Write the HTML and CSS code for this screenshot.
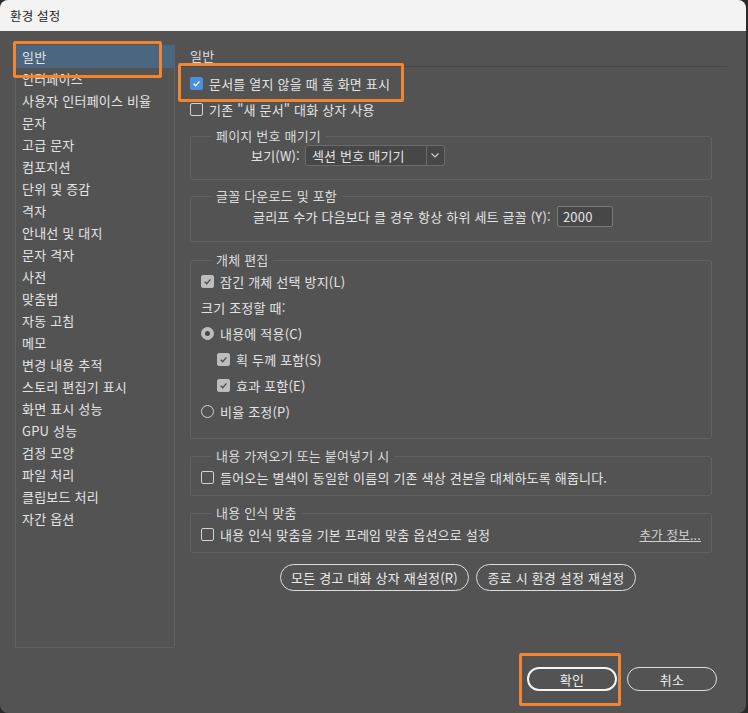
FILE: index.html
```html
<!DOCTYPE html>
<html lang="ko">
<head>
  <meta charset="UTF-8" />
  <meta name="viewport" content="width=device-width, initial-scale=1.0"/>
  <title>환경 설정</title>
  <link rel="stylesheet" href="styles.css">
</head>
<body>

  <div class="window">
    <div class="titlebar">환경 설정</div>

    <div class="content">
      <ul class="sidebar">
        <li class="active">일반</li>
        <li>인터페이스</li>
        <li>사용자 인터페이스 비율</li>
        <li>문자</li>
        <li>고급 문자</li>
        <li>컴포지션</li>
        <li>단위 및 증감</li>
        <li>격자</li>
        <li>안내선 및 대지</li>
        <li>문자 격자</li>
        <li>사전</li>
        <li>맞춤법</li>
        <li>자동 고침</li>
        <li>메모</li>
        <li>변경 내용 추적</li>
        <li>스토리 편집기 표시</li>
        <li>화면 표시 성능</li>
        <li>GPU 성능</li>
        <li>검정 모양</li>
        <li>파일 처리</li>
        <li>클립보드 처리</li>
        <li>자간 옵션</li>
      </ul>

      <div class="main">
        <div class="main-head">일반</div>

        <div class="options">
          <div class="row">
            <span class="box blue"><svg viewBox="0 0 13 13"><polyline points="3.2,6.8 5.6,9.2 10,4"/></svg></span>
            문서를 열지 않을 때 홈 화면 표시
          </div>
          <div class="row">
            <span class="box"></span>
            기존 "새 문서" 대화 상자 사용
          </div>

          <fieldset class="group g-page">
            <legend>페이지 번호 매기기</legend>
            <div class="field">
              <span>보기(W):</span>
              <div class="select">
                <span class="select-text">섹션 번호 매기기</span>
                <span class="select-arrow"><svg viewBox="0 0 8 5"><polyline points="0.5,0.5 4,4 7.5,0.5"/></svg></span>
              </div>
            </div>
          </fieldset>

          <fieldset class="group g-font">
            <legend>글꼴 다운로드 및 포함</legend>
            <div class="field">
              <span>글리프 수가 다음보다 클 경우 항상 하위 세트 글꼴 (Y):</span>
              <div class="num">2000</div>
            </div>
          </fieldset>

          <fieldset class="group g-object">
            <legend>개체 편집</legend>
            <div class="row">
              <span class="box grey"><svg viewBox="0 0 13 13"><polyline points="3.2,6.8 5.6,9.2 10,4"/></svg></span>
              잠긴 개체 선택 방지(L)
            </div>
            <div class="row">크기 조정할 때:</div>
            <div class="row">
              <span class="radio on"></span>
              내용에 적용(C)
            </div>
            <div class="row indent">
              <span class="box grey"><svg viewBox="0 0 13 13"><polyline points="3.2,6.8 5.6,9.2 10,4"/></svg></span>
              획 두께 포함(S)
            </div>
            <div class="row indent">
              <span class="box grey"><svg viewBox="0 0 13 13"><polyline points="3.2,6.8 5.6,9.2 10,4"/></svg></span>
              효과 포함(E)
            </div>
            <div class="row">
              <span class="radio"></span>
              비율 조정(P)
            </div>
          </fieldset>

          <fieldset class="group g-small">
            <legend>내용 가져오기 또는 붙여넣기 시</legend>
            <div class="row">
              <span class="box"></span>
              들어오는 별색이 동일한 이름의 기존 색상 견본을 대체하도록 해줍니다.
            </div>
          </fieldset>

          <fieldset class="group g-small">
            <legend>내용 인식 맞춤</legend>
            <div class="row">
              <span class="box"></span>
              내용 인식 맞춤을 기본 프레임 맞춤 옵션으로 설정
              <a class="more">추가 정보...</a>
            </div>
          </fieldset>
        </div>

        <div class="resets">
          <button class="pill reset-all">모든 경고 대화 상자 재설정(R)</button>
          <button class="pill reset-quit">종료 시 환경 설정 재설정</button>
        </div>
      </div>
    </div>

    <div class="footer">
      <button class="pill ok">확인</button>
      <button class="pill">취소</button>
    </div>

    <!-- 강조 표시 -->
    <div class="mark mark-nav"></div>
    <div class="mark mark-home"></div>
    <div class="mark mark-ok"></div>
  </div>

</body>
</html>
```

FILE: styles.css
```css
* {
  box-sizing: border-box;
}

html, body {
  margin: 0;
  background: #2a2a2a;
}

body {
  font-family: "Noto Sans CJK KR", "Noto Sans", sans-serif;
  font-size: 13px;
  letter-spacing: 0.2px;
  color: #e4e4e4;
}

.window {
  position: relative;
  width: 746px;
  height: 713px;
  background: #535353;
  border-radius: 8px;
  overflow: hidden;
  display: flex;
  flex-direction: column;
}

.titlebar {
  height: 31px;
  flex-shrink: 0;
  background: #f3f3f3;
  color: #1b1b1b;
  font-size: 12.5px;
  line-height: 31px;
  padding-left: 10px;
}

.content {
  display: flex;
  padding: 14px 0 0 15px;
}

/* 왼쪽 목록 */
.sidebar {
  list-style: none;
  margin: 0;
  padding: 0;
  width: 160px;
  height: 603px;
  border: 1px solid #616161;
  border-top: none;
}

.sidebar li {
  height: 22px;
  line-height: 22px;
  padding-left: 6px;
  white-space: nowrap;
}

.sidebar li.active {
  background: #4a6681;
  height: 23px;
  line-height: 23px;
}

/* 오른쪽 설정 영역 */
.main {
  margin-left: 3px;
  width: 549px;
}

.main-head {
  height: 22px;
  line-height: 22px;
  padding-left: 12px;
  border-bottom: 1px solid #474747;
  color: #dcdcdc;
}

.options {
  padding: 3px 0 0 12px;
}

.row {
  display: flex;
  align-items: center;
  height: 26px;
  white-space: nowrap;
}

.row.indent {
  padding-left: 16px;
}

.box {
  width: 13px;
  height: 13px;
  border: 1px solid #d2d2d2;
  border-radius: 2px;
  margin-right: 6px;
  flex-shrink: 0;
}

.box svg {
  display: block;
  width: 11px;
  height: 11px;
  fill: none;
  stroke-width: 1.6;
}

.box.blue {
  background: #4b8fe2;
  border-color: #4b8fe2;
}

.box.blue svg {
  stroke: #fff;
}

.box.grey {
  background: #bdbdbd;
  border-color: #bdbdbd;
}

.box.grey svg {
  stroke: #4c4c4c;
}

.radio {
  width: 13px;
  height: 13px;
  border: 1px solid #d2d2d2;
  border-radius: 50%;
  margin-right: 6px;
  flex-shrink: 0;
  display: flex;
  align-items: center;
  justify-content: center;
}

.radio.on {
  background: #bdbdbd;
  border-color: #bdbdbd;
}

.radio.on::after {
  content: "";
  width: 5px;
  height: 5px;
  border-radius: 50%;
  background: #474747;
}

/* 그룹 상자 */
.group {
  width: 522px;
  margin: 9px 0 0;
  padding: 0 10px 5px;
  border: 1px solid #616161;
  border-radius: 2px;
  min-width: 0;
}

.group legend {
  margin-left: 10px;
  padding: 0 5px;
  height: 16px;
  line-height: 16px;
  color: #dcdcdc;
}

.g-page {
  margin-top: 6px;
  padding-bottom: 13px;
}

.g-font {
  margin-top: 8px;
  padding-bottom: 14px;
}

.g-object {
  margin-top: 10px;
  padding-bottom: 14px;
}

.field {
  display: flex;
  align-items: center;
  gap: 5px;
  height: 21px;
  margin-top: 1px;
  padding-left: 50px;
  white-space: nowrap;
}

.g-font .field {
  margin-top: 2px;
  padding-left: 52px;
  gap: 6px;
}

.select {
  display: flex;
  width: 140px;
  height: 21px;
  background: #474747;
  border: 1px solid #6b6b6b;
  border-radius: 3px;
}

.select-text {
  flex: 1;
  padding-left: 6px;
  line-height: 19px;
}

.select-arrow {
  width: 18px;
  border-left: 1px solid #6b6b6b;
  display: flex;
  align-items: center;
  justify-content: center;
}

.select-arrow svg {
  width: 8px;
  height: 5px;
  fill: none;
  stroke: #d0d0d0;
  stroke-width: 1.1;
}

.num {
  width: 56px;
  height: 21px;
  background: #474747;
  border: 1px solid #7a7a7a;
  border-radius: 2px;
  padding-left: 5px;
  line-height: 19px;
}

.more {
  margin-left: auto;
  color: #d0d0d0;
  text-decoration: underline;
  font-size: 12.5px;
}

/* 버튼 */
.pill {
  font-family: inherit;
  font-size: 13px;
  letter-spacing: 0.2px;
  color: #ececec;
  background: transparent;
  border: 1px solid #dedede;
  border-radius: 14px;
  padding: 0;
  cursor: pointer;
}

.resets {
  display: flex;
  gap: 7px;
  margin: 11px 0 0 102px;
}

.resets .pill {
  height: 27px;
}

.reset-all {
  width: 189px;
}

.reset-quit {
  width: 160px;
}

.footer {
  display: flex;
  justify-content: flex-end;
  gap: 10px;
  margin-top: 19px;
  padding-right: 29px;
}

.footer .pill {
  width: 90px;
  height: 24px;
  border-radius: 12px;
}

.footer .pill.ok {
  border: 2px solid #f4f4f4;
}

/* 주황색 표시 상자 */
.mark {
  position: absolute;
  border: 3px solid #f08633;
  border-radius: 2px;
}

.mark-nav {
  left: 13px;
  top: 41px;
  width: 149px;
  height: 37px;
}

.mark-home {
  left: 178px;
  top: 63px;
  width: 226px;
  height: 39px;
}

.mark-ok {
  left: 519px;
  top: 653px;
  width: 102px;
  height: 53px;
}
```
